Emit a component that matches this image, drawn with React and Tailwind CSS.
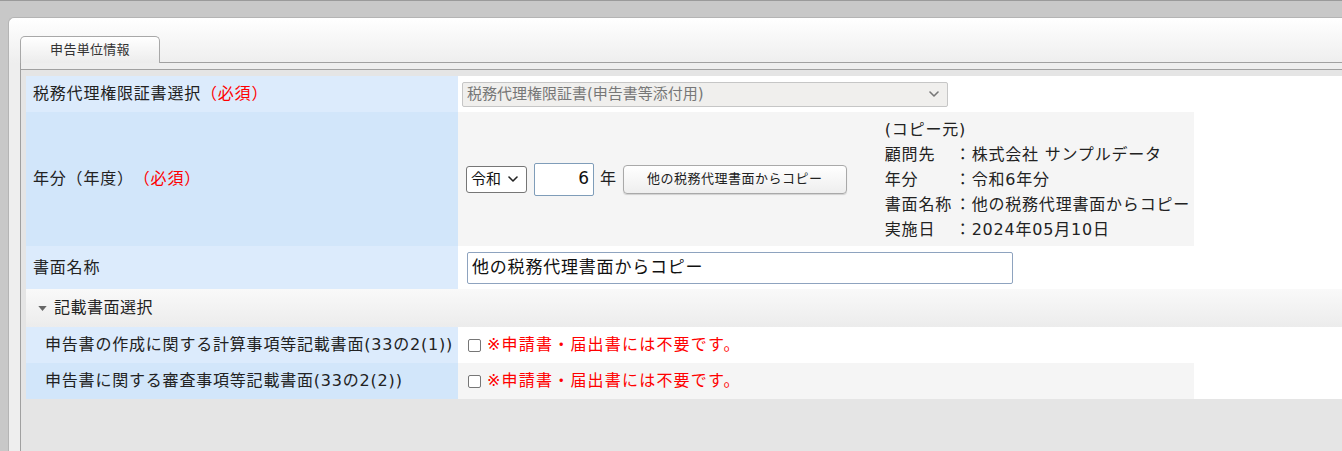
import React from 'react';

const font = { fontFamily: '"DejaVu Sans", "Noto Sans CJK JP", sans-serif' };

const Label = ({ children, dark, indent }) => (
  <div
    className={`w-[432px] shrink-0 flex items-center text-[16px] text-[#222] ${dark ? 'bg-[#d2e6fa]' : 'bg-[#dcebfc]'} ${indent ? 'pl-[19px]' : 'pl-[7px]'}`}
  >
    {children}
  </div>
);

const Req = () => <span className="text-[#ff0000]">（必須）</span>;

const Chevron = ({ className }) => (
  <svg viewBox="0 0 10 6" className={className} fill="none" stroke="currentColor" strokeWidth="1.6" strokeLinecap="round" strokeLinejoin="round">
    <path d="M1 1l4 4 4-4" />
  </svg>
);

const Check = () => (
  <span className="inline-block w-[13px] h-[13px] shrink-0 rounded-[2px] border border-[#767676] bg-white"></span>
);

const NoteRow = ({ label, dark }) => (
  <div className="flex w-[1168px] h-[36px]">
    <Label dark={dark} indent>{label}</Label>
    <div className={`flex-1 flex items-center pl-[10px] ${dark ? 'bg-[#f5f5f5]' : 'bg-white'}`}>
      <Check />
      <span className="ml-[6px] text-[16px] tracking-[1.2px] text-[#ff0000]">※申請書・届出書には不要です。</span>
    </div>
  </div>
);

export default function App() {
  const copyInfo = [
    ['顧問先', '株式会社 サンプルデータ'],
    ['年分', '令和6年分'],
    ['書面名称', '他の税務代理書面からコピー'],
    ['実施日', '2024年05月10日'],
  ];

  return (
    <div style={font} className="w-[1342px] h-[451px] overflow-hidden bg-[#c8c8c8] border-t border-[#9a9a9a] pt-[16px] pl-[8px] tracking-[0.8px]">
      <div className="w-[1400px] h-[434px] rounded-tl-[6px] border-l border-t border-[#b4b4b4] bg-[linear-gradient(to_bottom,#ffffff,#eeeeee_45px)] pl-[11px] pt-[18px] flex flex-col">
        {/* tabs */}
        <div className="flex h-[27px] shrink-0">
          <div className="w-[140px] h-[27px] rounded-t-[5px] border border-b-0 border-[#a8a8a8] bg-gradient-to-b from-white to-[#ececec] flex items-center justify-center text-[13px] tracking-[0.3px] text-[#333]">
            申告単位情報
          </div>
          <div className="flex-1 border-b border-[#a0a0a0]"></div>
        </div>

        <div className="flex-1 flex flex-col border-l border-[#a0a0a0]">
          <div className="h-[6px] bg-[#eeeeee] shrink-0"></div>
          <div className="flex-1 border-t border-[#a0a0a0] bg-[#e5e5e5] pt-[6px] pl-[5px]">
            <div className="bg-white">
              {/* row 1 */}
              <div className="flex w-[1168px] h-[36px]">
                <Label>
                  税務代理権限証書選択<Req />
                </Label>
                <div className="flex-1 flex items-center pl-[4px] bg-white">
                  <div className="w-[486px] h-[25px] border border-[#c6c6c6] rounded-[2px] bg-[#f0efed] flex items-center justify-between pl-[4px] pr-[8px] text-[15px] tracking-normal text-[#777]">
                    <span>税務代理権限証書(申告書等添付用)</span>
                    <Chevron className="w-[10px] h-[6px] text-[#777]" />
                  </div>
                </div>
              </div>

              {/* row 2 */}
              <div className="flex w-[1168px] h-[134px]">
                <Label dark>
                  年分（年度）<Req />
                </Label>
                <div className="flex-1 flex items-center pl-[8px] bg-[#f5f5f5]">
                  <div className="w-[61px] h-[27px] border border-[#767676] rounded-[3px] bg-white flex items-center justify-between pl-[4px] pr-[8px] text-[15px] tracking-normal text-[#111]">
                    <span>令和</span>
                    <Chevron className="w-[10px] h-[6px] text-[#222]" />
                  </div>
                  <div className="ml-[7px] w-[60px] h-[33px] border border-[#7f9db9] rounded-[2px] bg-white flex items-center justify-end pr-[4px] text-[17px] tracking-normal text-[#111]">
                    6
                  </div>
                  <span className="ml-[6px] text-[16px] text-[#222]">年</span>
                  <button className="ml-[6px] w-[224px] h-[29px] rounded-[4px] border border-[#a9a9a9] bg-gradient-to-b from-white to-[#eeeeee] shadow-[0_1px_1px_rgba(0,0,0,0.15)] text-[13px] tracking-[0.5px] text-[#222]">
                    他の税務代理書面からコピー
                  </button>
                  <div className="ml-[38px] text-[16px] leading-[25px] text-[#222]">
                    <div>(コピー元)</div>
                    {copyInfo.map(([k, v]) => (
                      <div key={k} className="flex">
                        <span className="w-[70px]">{k}</span>
                        <span>：{v}</span>
                      </div>
                    ))}
                  </div>
                </div>
              </div>

              {/* row 3 */}
              <div className="flex w-[1168px] h-[43px]">
                <Label>書面名称</Label>
                <div className="flex-1 flex items-center pl-[9px] bg-white">
                  <div className="w-[546px] h-[32px] border border-[#8ea3bf] rounded-[2px] bg-white flex items-center px-[4px] text-[17px] tracking-[0.8px] text-[#111]">
                    他の税務代理書面からコピー
                  </div>
                </div>
              </div>

              {/* section header */}
              <div className="h-[38px] flex items-center pl-[12px] bg-gradient-to-b from-[#f9f9f9] to-[#ececec]">
                <svg viewBox="0 0 10 6" className="w-[9px] h-[5px] text-[#666]" fill="currentColor">
                  <path d="M0 0h10L5 6z" />
                </svg>
                <span className="ml-[7px] text-[16px] tracking-[0.5px] text-[#222]">記載書面選択</span>
              </div>

              <NoteRow label="申告書の作成に関する計算事項等記載書面(33の2(1))" />
              <NoteRow label="申告書に関する審査事項等記載書面(33の2(2))" dark />
            </div>
          </div>
        </div>
      </div>
    </div>
  );
}
